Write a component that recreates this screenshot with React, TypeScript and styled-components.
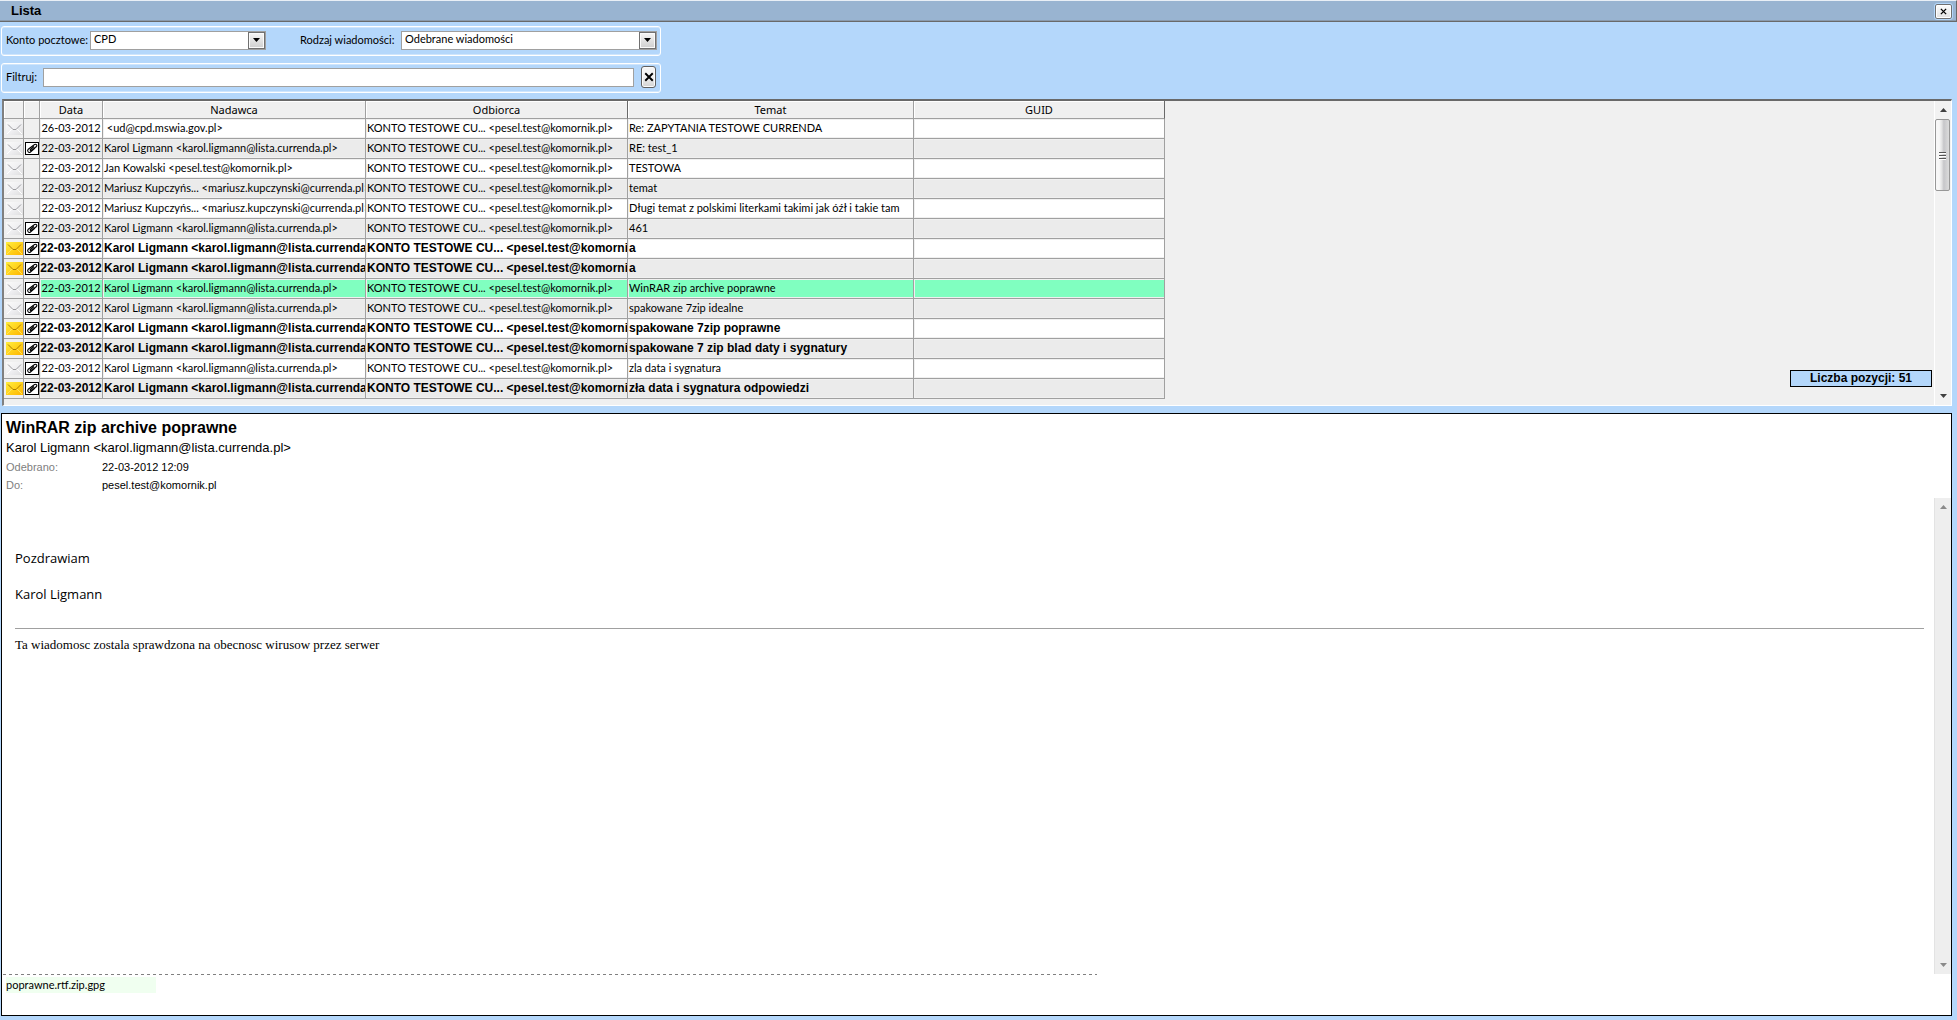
import React, { useState } from "react";
import styled, { createGlobalStyle, css } from "styled-components";

const sans = `"Liberation Sans", Arial, sans-serif`;
const compact = `Lato, "Liberation Sans", sans-serif`;
const caption = `"Noto Sans", Tahoma, sans-serif`;

const GlobalStyle = createGlobalStyle`
  *, *::before, *::after { box-sizing: border-box; }
  body {
    margin: 0;
    background: #b4d7fb;
    color: #000;
    font: 11px/14px ${sans};
  }
`;

const Window = styled.div`
  min-height: 100vh;
  display: flex;
  flex-direction: column;
  padding-bottom: 4px;
`;

const TitleBar = styled.header`
  height: 22px;
  display: flex;
  align-items: center;
  justify-content: space-between;
  padding: 0 4px 0 11px;
  background: #99b4d1;
  border-top: 1px solid #e9eff6;
  border-right: 1px solid #696969;
  border-bottom: 1px solid #696969;
  box-shadow: inset 0 -1px 0 #8a9aac;
`;

const Title = styled.h1`
  margin: 0;
  font: bold 13px/18px ${sans};
`;

const CloseButton = styled.button`
  width: 17px;
  height: 15px;
  display: grid;
  place-items: center;
  padding: 0;
  border: 1px solid #707070;
  border-radius: 2px;
  outline: 1px solid #b4d7fb;
  background: linear-gradient(#fdfdfd, #e2e2e2);
  box-shadow: inset 0 0 0 1px #fff;
`;

const Toolbar = styled.form`
  display: flex;
  flex-direction: column;
  align-items: flex-start;
  gap: 7px;
  padding: 4px 0 6px 1px;
  font: 11px/14px ${compact};
`;

const Group = styled.div`
  width: 660px;
  max-width: 100%;
  height: 30px;
  display: flex;
  align-items: center;
  padding: 0 4px 2px;
  border: 1px solid #fff;
  border-radius: 3px;
  box-shadow: inset 0 1px 0 #cfe5fc, inset 0 -1px 0 #cfe5fc;
`;

const Label = styled.label<{ $width: number }>`
  flex: 0 0 ${(p) => p.$width}px;
  white-space: nowrap;
`;

const Combo = styled.span<{ $width: number }>`
  position: relative;
  flex: 0 0 ${(p) => p.$width}px;
  height: 19px;
  margin-right: 34px;
  &:last-child { margin-right: 0; }
`;

const Select = styled.select`
  appearance: none;
  width: 100%;
  height: 19px;
  padding: 0 20px 3px 3px;
  border: 1px solid #a0a0a0;
  border-radius: 0;
  background: #fff;
  color: #000;
  font: 11px/14px ${compact};
`;

const ComboArrow = styled.span`
  position: absolute;
  top: 1px;
  right: 1px;
  width: 17px;
  height: 17px;
  display: grid;
  place-items: center;
  border: 1px solid #707070;
  background: linear-gradient(#f5f5f5, #cfcfcf);
  box-shadow: inset 0 0 0 1px #fafafa;
  pointer-events: none;
`;

const FilterInput = styled.input`
  flex: 1;
  min-width: 0;
  height: 19px;
  margin-right: 7px;
  padding: 0 3px;
  border: 1px solid #a0a0a0;
  background: #fff;
  font: 11px/14px ${compact};
`;

const ClearButton = styled.button`
  width: 15px;
  height: 22px;
  display: grid;
  place-items: center;
  padding: 0;
  border: 1px solid #606060;
  border-radius: 3px;
  background: linear-gradient(#f4f4f4 45%, #d2d2d2);
  box-shadow: inset 0 0 0 1px #fbfbfb;
`;

const ListPanel = styled.section`
  position: relative;
  display: flex;
  justify-content: space-between;
  margin: 0 5px 7px 2px;
  border: 1px solid #fff;
  border-top: 2px solid #696969;
  border-left: 2px solid #808080;
  background: #f0f0f0;
`;

const TableArea = styled.div`
  flex: 1;
  min-width: 0;
  overflow: hidden;
  padding-bottom: 6px;
`;

const Table = styled.table`
  width: 1161px;
  table-layout: fixed;
  border-collapse: separate;
  border-spacing: 0;
`;

const HeadCell = styled.th<{ $dark?: boolean }>`
  height: 18px;
  padding: 0;
  border-right: 1px solid ${(p) => (p.$dark ? "#696969" : "#a0a0a0")};
  border-bottom: 1px solid #a0a0a0;
  background: #f0f0f0;
  box-shadow: inset 1px 1px 0 #fff;
  font: 11px/14px ${caption};
  text-align: center;
`;

type RowKind = "plain" | "alt" | "selected";
const fills: Record<RowKind, string> = {
  plain: "#ffffff",
  alt: "#ebebeb",
  selected: "#80ffc0",
};

const cellBase = css`
  height: 20px;
  border-right: 1px solid #a0a0a0;
  border-bottom: 1px solid #a0a0a0;
  overflow: hidden;
  white-space: nowrap;
`;

const Cell = styled.td<{ $kind: RowKind; $bold?: boolean; $center?: boolean }>`
  ${cellBase}
  padding: 0 0 1px ${(p) => (p.$center ? 0 : 1)}px;
  background: ${(p) => fills[p.$kind]};
  box-shadow: inset 1px 1px 0 #f0f0f0, inset 0 -1px 0 #f0f0f0;
  font: ${(p) => (p.$bold ? `bold 12px/14px ${sans}` : `11px/14px ${compact}`)};
  text-align: ${(p) => (p.$center ? "center" : "left")};
  white-space: pre;
`;

const IconCell = styled.td`
  ${cellBase}
  padding: 0 0 0 1px;
  background: #f0f0f0;
  svg { display: block; }
`;

const EnvelopeCell = styled(IconCell)`
  padding-left: 2px;
`;

const ScrollTrack = styled.div<{ $mail?: boolean }>`
  flex: 0 0 17px;
  display: flex;
  flex-direction: column;
  align-items: center;
  justify-content: space-between;
  border-left: 1px solid ${(p) => (p.$mail ? "#e3e3e3" : "#fff")};
  background: ${(p) => (p.$mail ? "#eeeeee" : "#f2f2f2")};
`;

const ArrowButton = styled.button`
  width: 16px;
  height: 18px;
  display: grid;
  place-items: center;
  padding: 0;
  border: 0;
  background: transparent;
`;

const Thumb = styled.div`
  width: 15px;
  height: 72px;
  margin: 0 1px auto 0;
  display: grid;
  place-items: center;
  border: 1px solid #979797;
  border-radius: 2px;
  background: linear-gradient(90deg, #f7f7f7 25%, #e2e2e2 45%, #c6c6c9 60%, #dcdcdc);
`;

const Badge = styled.output`
  position: absolute;
  right: 19px;
  bottom: 18px;
  width: 142px;
  height: 17px;
  border: 1px solid #000;
  background: #b4d7fb;
  font: bold 12px/15px ${sans};
  text-align: center;
`;

const MailPanel = styled.article`
  flex: 1;
  display: flex;
  flex-direction: column;
  margin: 0 5px 0 1px;
  border: 1px solid #000;
  background: #fff;
`;

const MailHeader = styled.header`
  padding: 4px 4px;
`;

const Subject = styled.h2`
  margin: 0;
  font: bold 16px/20px ${sans};
`;

const Sender = styled.p`
  margin: 0;
  font-size: 13px;
  line-height: 20px;
`;

const Facts = styled.dl`
  display: grid;
  grid-template-columns: 96px 1fr;
  margin: 0;
  line-height: 18px;
`;
const FactName = styled.dt`
  color: #808080;
`;
const FactValue = styled.dd`
  margin: 0;
`;

const MailBody = styled.div`
  flex: 1;
  display: flex;
`;

const Letter = styled.div`
  flex: 1;
  padding: 50px 10px 0 13px;
`;

const Greeting = styled.p`
  margin: 0 0 16px;
  font: 13px/20px "Open Sans", Calibri, sans-serif;
`;

const Rule = styled.hr`
  height: 1px;
  margin: 24px 0 8px;
  border: 0;
  background: #a0a0a0;
`;

const ServerNote = styled.p`
  margin: 0;
  font: 13px/16px "Liberation Serif", "Times New Roman", serif;
`;

const Attachments = styled.footer`
  width: 1095px;
  max-width: 100%;
  height: 41px;
  padding: 2px 4px;
  background: repeating-linear-gradient(90deg, transparent 0 1px, #808080 1px 4px, transparent 4px 6px) top left / 100% 1px
    no-repeat;
`;

const Attachment = styled.a`
  display: block;
  width: 150px;
  height: 16px;
  margin-top: 1px;
  background: #f0fff0;
  color: #000;
  font: 11px/16px ${compact};
  text-decoration: none;
`;

const CrossIcon = ({ size }: { size: number }) => (
  <svg width={size} height={size} viewBox="0 0 8 8" aria-hidden="true">
    <path d="M1 1l6 6M7 1l-6 6" stroke="#000" strokeWidth="1.5" />
  </svg>
);

const Caret = ({ up, color = "#000" }: { up?: boolean; color?: string }) => (
  <svg width="7" height="4" viewBox="0 0 7 4" aria-hidden="true">
    <path d={up ? "M0 4h7L3.500 0z" : "M0 0h7L3.500 4z"} fill={color} />
  </svg>
);

const Grip = () => (
  <svg width="7" height="9" viewBox="0 0 7 9" aria-hidden="true">
    <path d="M0 1.500h7M0 4.500h7M0 7.500h7" stroke="#555" />
    <path d="M0 2.500h7M0 5.500h7M0 8.500h7" stroke="#fff" />
  </svg>
);

const Envelope = ({ unread }: { unread?: boolean }) => (
  <svg width="17" height="13" viewBox="0 0 17 13" role="img" aria-label={unread ? "Nieprzeczytana" : "Przeczytana"}>
    <defs>
      <linearGradient id={unread ? "envUnread" : "envRead"} x1="0" y1="0" x2="1" y2="1">
        <stop offset="0" stopColor={unread ? "#ffee40" : "#fafafa"} />
        <stop offset="0.5" stopColor={unread ? "#ffd21c" : "#f0f0f2"} />
        <stop offset="1" stopColor={unread ? "#ffb400" : "#dededf"} />
      </linearGradient>
    </defs>
    <rect width="17" height="13" fill={`url(#${unread ? "envUnread" : "envRead"})`} />
    <path d="M1 12l5-5M16 12l-5-5" fill="none" stroke={unread ? "#ffe45c" : "#ffffff"} />
    <path d="M2 2.500l5 5h3l5-5" fill="none" stroke={unread ? "#a87b00" : "#9c9ca0"} />
  </svg>
);

const Clip = () => (
  <svg width="14" height="13" viewBox="0 0 14 13" role="img" aria-label="Załącznik">
    <rect x="0.500" y="0.500" width="13" height="12" fill="#fff" stroke="#000" />
    <path
      d="M9 4.500L5.500 7.500c-.8.800.2 1.800 1 1l4.700-3.700c1.600-1.600-.4-3.300-2-2L3.300 7.200c-1.600 1.600.2 4.200 2.200 2.800l4.500-3.800"
      fill="none"
      stroke="#000"
      strokeWidth="1.1"
    />
  </svg>
);

interface Mail {
  date: string;
  from: string;
  subject: string;
  clip?: boolean;
  unread?: boolean;
}

const recipient = "KONTO TESTOWE CU... <pesel.test@komornik.pl>";
const karol = "Karol Ligmann <karol.ligmann@lista.currenda.pl>";
const mariusz = "Mariusz Kupczyńs... <mariusz.kupczynski@currenda.pl>";
const day = "22-03-2012";

const mails: Mail[] = [
  { date: "26-03-2012", from: " <ud@cpd.mswia.gov.pl>", subject: "Re: ZAPYTANIA TESTOWE CURRENDA" },
  { date: day, from: karol, subject: "RE: test_1", clip: true },
  { date: day, from: "Jan Kowalski <pesel.test@komornik.pl>", subject: "TESTOWA" },
  { date: day, from: mariusz, subject: "temat" },
  { date: day, from: mariusz, subject: "Długi temat z polskimi literkami takimi jak óźł i takie tam" },
  { date: day, from: karol, subject: "461", clip: true },
  { date: day, from: karol, subject: "a", clip: true, unread: true },
  { date: day, from: karol, subject: "a", clip: true, unread: true },
  { date: day, from: karol, subject: "WinRAR zip archive poprawne", clip: true },
  { date: day, from: karol, subject: "spakowane 7zip idealne", clip: true },
  { date: day, from: karol, subject: "spakowane 7zip poprawne", clip: true, unread: true },
  { date: day, from: karol, subject: "spakowane 7 zip blad daty i sygnatury", clip: true, unread: true },
  { date: day, from: karol, subject: "zla data i sygnatura", clip: true },
  { date: day, from: karol, subject: "zła data i sygnatura odpowiedzi", clip: true, unread: true },
];

const columns = [
  { title: "", width: 20 },
  { title: "", width: 16 },
  { title: "Data", width: 63 },
  { title: "Nadawca", width: 263 },
  { title: "Odbiorca", width: 262, dark: true },
  { title: "Temat", width: 286 },
  { title: "GUID", width: 251, dark: true },
];

export default function App() {
  const [selected, setSelected] = useState(8);
  const [filter, setFilter] = useState("");

  return (
    <Window>
      <GlobalStyle />
      <TitleBar>
        <Title>Lista</Title>
        <CloseButton type="button" aria-label="Zamknij">
          <CrossIcon size={7} />
        </CloseButton>
      </TitleBar>

      <Toolbar onSubmit={(e) => e.preventDefault()}>
        <Group>
          <Label htmlFor="account" $width={84}>Konto pocztowe:</Label>
          <Combo $width={176}>
            <Select id="account" defaultValue="CPD">
              <option>CPD</option>
            </Select>
            <ComboArrow><Caret /></ComboArrow>
          </Combo>
          <Label htmlFor="kind" $width={101}>Rodzaj wiadomości:</Label>
          <Combo $width={256}>
            <Select id="kind" defaultValue="Odebrane wiadomości">
              <option>Odebrane wiadomości</option>
            </Select>
            <ComboArrow><Caret /></ComboArrow>
          </Combo>
        </Group>
        <Group>
          <Label htmlFor="filter" $width={37}>Filtruj:</Label>
          <FilterInput id="filter" value={filter} onChange={(e) => setFilter(e.target.value)} />
          <ClearButton type="button" aria-label="Wyczyść filtr" onClick={() => setFilter("")}>
            <CrossIcon size={10} />
          </ClearButton>
        </Group>
      </Toolbar>

      <ListPanel>
        <TableArea>
          <Table>
            <colgroup>
              {columns.map((c, i) => (
                <col key={i} width={c.width} />
              ))}
            </colgroup>
            <thead>
              <tr>
                {columns.map((c, i) => (
                  <HeadCell key={i} scope="col" $dark={c.dark}>{c.title}</HeadCell>
                ))}
              </tr>
            </thead>
            <tbody>
              {mails.map((m, i) => {
                const kind: RowKind = i === selected ? "selected" : i % 2 ? "alt" : "plain";
                return (
                  <tr key={i} onClick={() => setSelected(i)}>
                    <EnvelopeCell><Envelope unread={m.unread} /></EnvelopeCell>
                    <IconCell>{m.clip && <Clip />}</IconCell>
                    <Cell $kind={kind} $bold={m.unread} $center>{m.date}</Cell>
                    <Cell $kind={kind} $bold={m.unread}>{m.from}</Cell>
                    <Cell $kind={kind} $bold={m.unread}>{recipient}</Cell>
                    <Cell $kind={kind} $bold={m.unread}>{m.subject}</Cell>
                    <Cell $kind={kind} />
                  </tr>
                );
              })}
            </tbody>
          </Table>
        </TableArea>
        <ScrollTrack>
          <ArrowButton type="button" aria-label="W górę"><Caret up color="#404040" /></ArrowButton>
          <Thumb><Grip /></Thumb>
          <ArrowButton type="button" aria-label="W dół"><Caret color="#404040" /></ArrowButton>
        </ScrollTrack>
        <Badge>Liczba pozycji: 51</Badge>
      </ListPanel>

      <MailPanel>
        <MailHeader>
          <Subject>WinRAR zip archive poprawne</Subject>
          <Sender>{karol}</Sender>
          <Facts>
            <FactName>Odebrano:</FactName>
            <FactValue>22-03-2012 12:09</FactValue>
            <FactName>Do:</FactName>
            <FactValue>pesel.test@komornik.pl</FactValue>
          </Facts>
        </MailHeader>
        <MailBody>
          <Letter>
            <Greeting>Pozdrawiam</Greeting>
            <Greeting>Karol Ligmann</Greeting>
            <Rule />
            <ServerNote>Ta wiadomosc zostala sprawdzona na obecnosc wirusow przez serwer</ServerNote>
          </Letter>
          <ScrollTrack $mail>
            <ArrowButton type="button" aria-label="W górę"><Caret up color="#8a8a8a" /></ArrowButton>
            <ArrowButton type="button" aria-label="W dół"><Caret color="#8a8a8a" /></ArrowButton>
          </ScrollTrack>
        </MailBody>
        <Attachments>
          <Attachment href="#poprawne">poprawne.rtf.zip.gpg</Attachment>
        </Attachments>
      </MailPanel>
    </Window>
  );
}
